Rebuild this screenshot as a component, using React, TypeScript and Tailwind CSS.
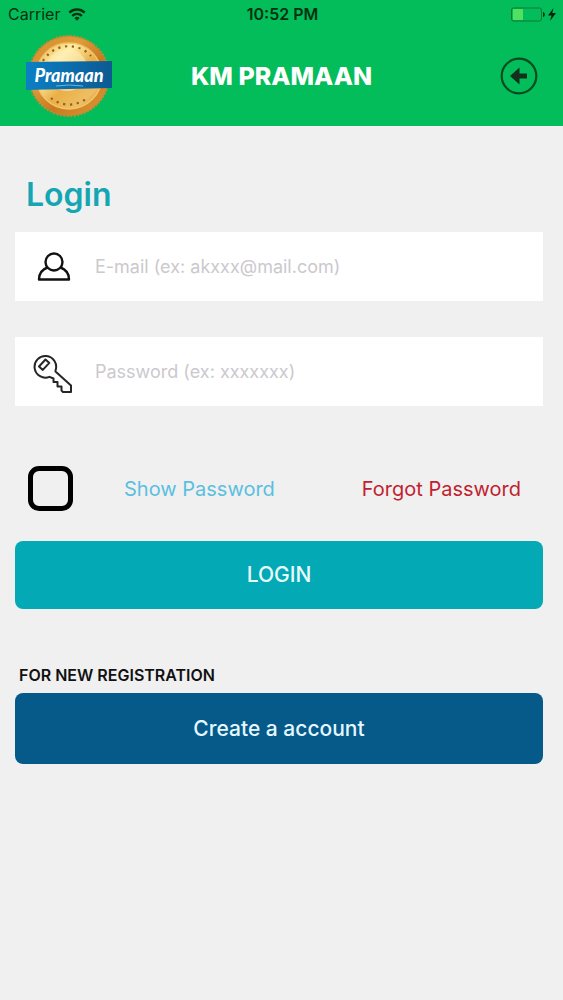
import { useState } from "react"

function WifiIcon() {
  return (
    <svg viewBox="0 0 18 13" className="h-[13px] w-[18px]" aria-hidden="true">
      <g fill="none" stroke="#06330f" strokeWidth="2.4">
        <path d="M1.3 4.7a11 11 0 0 1 15.4 0" />
        <path d="M4.2 7.8a6.9 6.9 0 0 1 9.6 0" />
      </g>
      <path d="M6.4 10a3.8 3.8 0 0 1 5.2 0L9 12.7z" fill="#06330f" />
    </svg>
  )
}

function BatteryIcon() {
  return (
    <svg viewBox="0 0 46 15" className="h-[15px] w-[46px]" aria-hidden="true">
      <rect x="0.5" y="1" width="30" height="13" rx="2" fill="none" stroke="#087a34" />
      <path d="M2 2h10v11H2z" fill="#52df62" />
      <path d="M32 5c2.500 .5 2.500 4.500 0 5z" fill="#06330f" />
      <path d="M42.500 1L37 8.500h3.500L39 14l6-8h-3.700z" fill="#06240c" />
    </svg>
  )
}

function SealLogo() {
  return (
    <svg viewBox="0 0 88 84" className="h-[84px] w-[88px]" role="img" aria-label="Pramaan">
      <defs>
        <linearGradient id="rim" x1="0" y1="0" x2="1" y2="1">
          <stop offset="0" stopColor="#d78d28" />
          <stop offset="0.35" stopColor="#dd9c3a" />
          <stop offset="0.6" stopColor="#c97a1f" />
          <stop offset="1" stopColor="#dd9a38" />
        </linearGradient>
        <linearGradient id="face" x1="0" y1="0" x2="1" y2="1">
          <stop offset="0" stopColor="#e6ab3e" />
          <stop offset="0.3" stopColor="#fff0a8" />
          <stop offset="0.55" stopColor="#e9af48" />
          <stop offset="0.8" stopColor="#eebf62" />
          <stop offset="1" stopColor="#c97f25" />
        </linearGradient>
        <linearGradient id="ribbon" x1="0" y1="0" x2="1" y2="0">
          <stop offset="0" stopColor="#0b80c4" />
          <stop offset="1" stopColor="#0c5a92" />
        </linearGradient>
      </defs>
      <circle cx="44" cy="42" r="40" fill="url(#rim)" stroke="#c58a35" strokeWidth="2" strokeDasharray="2 1.500" />
      <circle cx="44" cy="42" r="33" fill="url(#face)" stroke="#f3c469" strokeWidth="1.500" />
      <path
        d="M18 27A30 30 0 0 1 66 22M26 64a28 28 0 0 0 36 0"
        fill="none"
        stroke="#94601c"
        strokeWidth="2.200"
        strokeDasharray="2.200 4.600"
      />
      <circle cx="42" cy="36" r="21" fill="#fdefb8" opacity="0.6" />
      <path d="M1 28l86-1v27L1 56z" fill="url(#ribbon)" />
      <path d="M31 52q13-2 27 0" fill="none" stroke="#69b5e0" />
      <text
        x="44"
        y="48"
        textAnchor="middle"
        fill="#ffffff"
        className="font-[Lato,sans-serif] text-[18px] font-black italic"
      >
        Pramaan
      </text>
    </svg>
  )
}

function BackIcon() {
  return (
    <svg viewBox="0 0 38 38" className="h-[38px] w-[38px]" aria-hidden="true">
      <circle cx="19" cy="19" r="17.300" fill="none" stroke="#084a20" strokeWidth="2.200" />
      <path d="M10 19l9.500-8.500v6H27v5h-7.500v6z" fill="#13301c" />
    </svg>
  )
}

function UserIcon() {
  return (
    <svg viewBox="0 0 34 30" className="h-[30px] w-[34px]" fill="none" stroke="#111111" strokeWidth="2.400" strokeLinejoin="round" aria-hidden="true">
      <circle cx="17" cy="10" r="8.500" />
      <path d="M10.500 15.500C5 17.500 2 21.500 2 27.500h30c0-6-3-10-8.500-12" />
    </svg>
  )
}

function KeyIcon() {
  return (
    <svg viewBox="0 0 40 40" className="h-10 w-10" fill="none" stroke="#262626" strokeWidth="2" strokeLinejoin="round" aria-hidden="true">
      <path d="M22.500 17.500L38 31.500V38h-8l-1.500-1.500v-4h-4v-4.500h-4v-3.500l-4-1.700a10.800 10.800 0 1 1 6-6.300z" />
      <path d="M6 12.500l6.500-7 3.800 3.400-6.500 7z" />
    </svg>
  )
}

export default function App() {
  const [email, setEmail] = useState("")
  const [password, setPassword] = useState("")
  const [showPassword, setShowPassword] = useState(false)

  return (
    <div className="min-h-screen bg-[#f0f0f1] font-['Inter',sans-serif]">
      <header className="bg-[#03bc5a] pb-2">
        {/* Status bar */}
        <div className="grid grid-cols-3 items-center pt-0.5 pr-1.5 pl-2 text-base leading-6 text-[#06330f]">
          <div className="flex items-center gap-2">
            <span>Carrier</span>
            <WifiIcon />
          </div>
          <span className="text-center font-semibold">10:52 PM</span>
          <div className="flex justify-end">
            <BatteryIcon />
          </div>
        </div>

        {/* Title bar */}
        <div className="mt-2 grid grid-cols-[1fr_auto_1fr] items-center px-[25px]">
          <SealLogo />
          <h1 className="text-[25px] leading-8 font-extrabold text-white">KM PRAMAAN</h1>
          <button type="button" aria-label="Back" className="justify-self-end">
            <BackIcon />
          </button>
        </div>
      </header>

      <main className="pt-12 pr-5 pl-[15px]">
        <form onSubmit={(e) => e.preventDefault()}>
          <h2 className="pl-[11px] text-[32px] leading-[42px] font-semibold text-[#15a6b3]">Login</h2>

          <div className="mt-4 flex h-[69px] items-center bg-white">
            <label htmlFor="email" aria-label="E-mail" className="flex w-20 shrink-0 pl-[22px]">
              <UserIcon />
            </label>
            <input
              id="email"
              type="email"
              value={email}
              onChange={(e) => setEmail(e.target.value)}
              placeholder="E-mail (ex: akxxx@mail.com)"
              className="h-full min-w-0 flex-1 text-lg outline-none placeholder:text-[#cbc9cd]"
            />
          </div>

          <div className="mt-9 flex h-[69px] items-center bg-white">
            <label htmlFor="password" aria-label="Password" className="flex w-20 shrink-0 pt-1 pl-[18px]">
              <KeyIcon />
            </label>
            <input
              id="password"
              type={showPassword ? "text" : "password"}
              value={password}
              onChange={(e) => setPassword(e.target.value)}
              placeholder="Password (ex: xxxxxxx)"
              className="h-full min-w-0 flex-1 text-lg outline-none placeholder:text-[#cbc9cd]"
            />
          </div>

          <div className="mt-[60px] flex items-center pr-[22px] pl-[13px] text-[20px]">
            <input
              id="show-password"
              type="checkbox"
              checked={showPassword}
              onChange={(e) => setShowPassword(e.target.checked)}
              className="h-[45px] w-[45px] shrink-0 appearance-none rounded-[11px] border-[5px] border-black checked:bg-[#03a9b4]"
            />
            <label htmlFor="show-password" className="ml-[51px] text-[#5bbfdf]">
              Show Password
            </label>
            <a href="#forgot" className="ml-auto text-[#c01f2f]">
              Forgot Password
            </a>
          </div>

          <button type="submit" className="mt-[30px] h-[68px] w-full rounded-lg bg-[#03a9b4] text-[21px] font-medium text-[#e8fbfc]">
            LOGIN
          </button>
        </form>

        <p className="mt-[54px] pl-1 text-base leading-6 font-semibold text-[#111111]">FOR NEW REGISTRATION</p>
        <button type="button" className="mt-[6px] h-[71px] w-full rounded-lg bg-[#055a8a] text-[21px] font-medium text-[#e6f7ff]">
          Create a account
        </button>
      </main>
    </div>
  )
}
